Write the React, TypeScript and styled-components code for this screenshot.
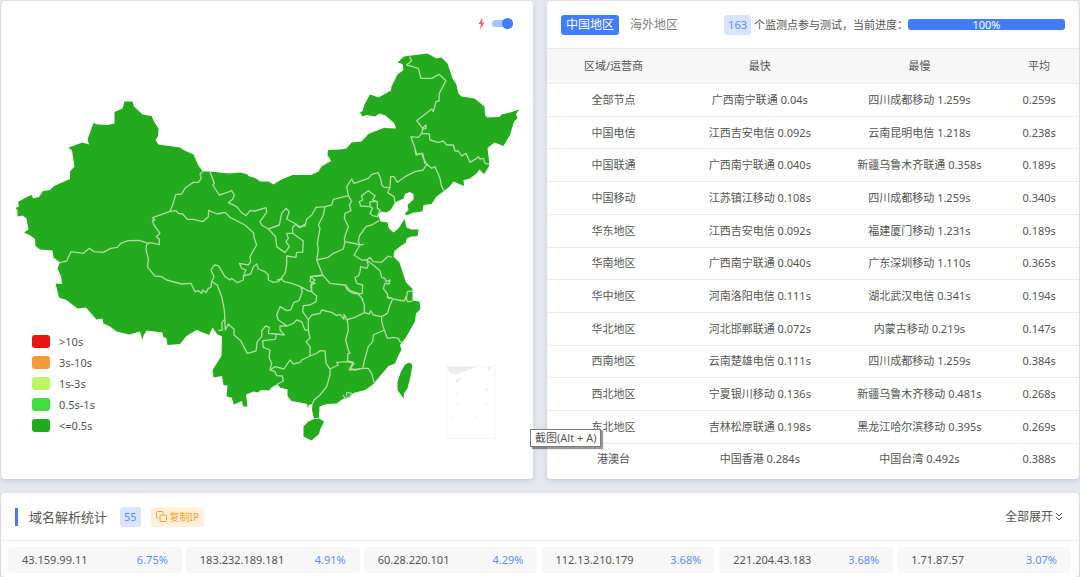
import React from "react";
import styled, { createGlobalStyle } from "styled-components";

const GlobalStyle = createGlobalStyle`
  *, *::before, *::after { box-sizing: border-box; }
  body {
    margin: 0;
    background: #e5e9ef;
    color: #555;
    font-family: "Noto Sans", "Noto Sans CJK SC", sans-serif;
    font-size: 11px;
    line-height: 16px;
  }
  button, input { font: inherit; color: inherit; margin: 0; }
`;

const Page = styled.main`
  position: relative;
  display: flex;
  flex-direction: column;
  gap: 14px;
  padding: 1px 1px 0;
`;

const TopRow = styled.div`
  display: grid;
  grid-template-columns: 1fr 1fr;
  gap: 14px;
`;

const Card = styled.section`
  position: relative;
  min-width: 0;
  background: #fff;
  border-radius: 4px;
  box-shadow: 0 2px 6px rgba(120, 140, 165, 0.3);
`;

const MapSvg = styled.svg`
  display: block;
  width: 100%;
  height: auto;
`;

const MapTools = styled.label`
  position: absolute;
  top: 16px;
  right: 20px;
  display: flex;
  align-items: center;
  gap: 7px;
`;

const Switch = styled.input`
  appearance: none;
  display: flex;
  align-items: center;
  justify-content: flex-end;
  width: 21px;
  height: 7px;
  border-radius: 4px;
  background: #a9c3ff;
  &::before {
    content: "";
    flex: none;
    width: 11px;
    height: 11px;
    border-radius: 50%;
    background: #427dff;
  }
  &:not(:checked) { justify-content: flex-start; }
`;

const Legend = styled.ul`
  position: absolute;
  left: 31px;
  bottom: 43px;
  margin: 0;
  padding: 0;
  list-style: none;
`;

const LegendItem = styled.li<{ $color: string }>`
  display: flex;
  align-items: center;
  gap: 9px;
  height: 21px;
  &::before {
    content: "";
    width: 18px;
    height: 13px;
    border-radius: 3px;
    background: ${(p) => p.$color};
  }
`;

const CardHead = styled.header`
  display: flex;
  align-items: center;
  height: 47px;
  padding: 0 14px;
`;

const Tab = styled.button<{ $active?: boolean }>`
  height: 20px;
  padding: 0 5px;
  border: 0;
  border-radius: 3px;
  background: ${(p) => (p.$active ? "#427dff" : "transparent")};
  color: ${(p) => (p.$active ? "#fff" : "#808080")};
  font-size: 12px;
  line-height: 20px;
  & + & { margin-left: 6px; }
`;

const Badge = styled.span`
  padding: 0 4px;
  border-radius: 3px;
  background: #d9e5ff;
  color: #5c8dff;
  line-height: 20px;
`;

const Progress = styled.div`
  display: flex;
  align-items: center;
  margin-left: auto;
  white-space: nowrap;
`;

const ProgressText = styled.span`
  padding-left: 3px;
`;

const ProgressBar = styled.div`
  width: 157px;
  height: 11px;
  border-radius: 3px;
  background: #427dff;
  color: #fff;
  line-height: 11px;
  text-align: center;
`;

const SpeedTable = styled.table`
  width: 100%;
  height: 427px;
  border-collapse: collapse;
  table-layout: fixed;
  text-align: center;
  white-space: nowrap;
`;

const HeadCell = styled.th<{ $width: number }>`
  width: ${(p) => p.$width}%;
  height: 35px;
  padding: 0;
  border-top: 1px solid #e4eaf0;
  border-bottom: 1px solid #ebeef0;
  background: #f7f7f7;
  font-weight: 400;
`;

const Cell = styled.td`
  padding: 0;
  tr + tr > & { border-top: 1px solid #ebedf0; }
`;

const StatHead = styled(CardHead)`
  height: 48px;
  border-bottom: 1px solid #ebebeb;
  padding-right: 16px;
`;

const StatTitle = styled.h2`
  margin: 0 13px 0 0;
  padding-left: 11px;
  border-left: 3px solid #427dff;
  font-size: 13px;
  font-weight: 400;
  line-height: 18px;
`;

const CopyButton = styled.button`
  display: flex;
  align-items: center;
  gap: 3px;
  height: 20px;
  margin-left: 10px;
  padding: 0 5px;
  border: 0;
  border-radius: 3px;
  background: #fff0dc;
  color: #ff9f1c;
  font-size: 10px;
`;

const ExpandButton = styled.button`
  display: flex;
  align-items: center;
  gap: 2px;
  margin-left: auto;
  padding: 0;
  border: 0;
  background: none;
  font-size: 12px;
`;

const IpGrid = styled.ul`
  display: grid;
  grid-template-columns: repeat(6, 1fr);
  gap: 4px;
  margin: 0;
  padding: 6px 8px 4px 7px;
  list-style: none;
`;

const IpItem = styled.li`
  display: flex;
  justify-content: space-between;
  padding: 0 14px;
  border-radius: 3px;
  background: #f7f7f7;
  line-height: 26px;
`;

const Percent = styled.span`
  color: #5c8dff;
`;

const Tooltip = styled.div`
  position: absolute;
  top: 429px;
  left: 530px;
  padding: 0 4px;
  border: 1px solid #7a7a7a;
  background: #fff;
  box-shadow: 2px 2px 1px rgba(0, 0, 0, 0.4);
  line-height: 16px;
`;

const legend = [
  { label: ">10s", color: "#e61610" },
  { label: "3s-10s", color: "#f89a36" },
  { label: "1s-3s", color: "#bef663" },
  { label: "0.5s-1s", color: "#42dd3f" },
  { label: "<=0.5s", color: "#24aa1d" },
];

const columns = [
  { label: "区域/运营商", width: 25 },
  { label: "最快", width: 30 },
  { label: "最慢", width: 30 },
  { label: "平均", width: 15 },
];

const rows = [
  ["全部节点", "广西南宁联通 0.04s", "四川成都移动 1.259s", "0.259s"],
  ["中国电信", "江西吉安电信 0.092s", "云南昆明电信 1.218s", "0.238s"],
  ["中国联通", "广西南宁联通 0.040s", "新疆乌鲁木齐联通 0.358s", "0.189s"],
  ["中国移动", "江苏镇江移动 0.108s", "四川成都移动 1.259s", "0.340s"],
  ["华东地区", "江西吉安电信 0.092s", "福建厦门移动 1.231s", "0.189s"],
  ["华南地区", "广西南宁联通 0.040s", "广东深圳移动 1.110s", "0.365s"],
  ["华中地区", "河南洛阳电信 0.111s", "湖北武汉电信 0.341s", "0.194s"],
  ["华北地区", "河北邯郸联通 0.072s", "内蒙古移动 0.219s", "0.147s"],
  ["西南地区", "云南楚雄电信 0.111s", "四川成都移动 1.259s", "0.384s"],
  ["西北地区", "宁夏银川移动 0.136s", "新疆乌鲁木齐移动 0.481s", "0.268s"],
  ["东北地区", "吉林松原联通 0.198s", "黑龙江哈尔滨移动 0.395s", "0.269s"],
  ["港澳台", "中国香港 0.284s", "中国台湾 0.492s", "0.388s"],
];

const ips = [
  ["43.159.99.11", "6.75%"],
  ["183.232.189.181", "4.91%"],
  ["60.28.220.101", "4.29%"],
  ["112.13.210.179", "3.68%"],
  ["221.204.43.183", "3.68%"],
  ["1.71.87.57", "3.07%"],
];

const mainland =
  "M15.5 208 19 206.5 18 202 25 198 28 196.5 32 195 33 198.5 39 197 43 191 50 190 54 186 70 179 70 171.5 74.5 166.5 72 150.5 68.5 147.5 82.5 142.5 89 144.5 87.5 139.5 93.5 123 97.5 124.5 107.5 125 114.5 123.5 114.5 112 122.5 108.5 124.5 101.5 132.5 101.5 134 106.5 142.5 114.5 151.5 116 154 121.5 158.5 128.5 158 136 155.5 140 158.5 144.5 180 147.5 183.5 150 193.5 154.5 198.5 166 203 171.5 210 171.5 228.5 173.5 240 172.5 246.5 174 249.5 176.5 255 178 260.5 181.5 268.5 181.5 273.5 184.5 281.5 179.5 292.5 175 311 175 318.5 171.5 321.5 166.5 331 161 327.5 155 328 150 340 149.5 346.5 148.5 351.5 142.5 361.5 141.5 368.5 134 383.5 128 396 128.5 394.5 123.5 385.5 115.5 379.5 113.5 375 116.5 366.5 115 362.5 116.5 360 112.5 362.5 111 364.5 104.5 370 94.5 378.5 97.5 391 90.5 391.5 86.5 397.5 74.5 403.5 70 402.5 64 397.5 62.5 404 56.5 411.5 55.5 427.5 53.5 436.5 58.5 441.5 57.5 447.5 63.5 452.5 78.5 456 83.5 458.5 93.5 461.5 96.5 474.5 98.5 484.5 106.5 485 115 487.5 117.5 499.5 117 501.5 114.5 510 112.5 519.5 109.5 516 114 517.5 118.5 514 121.5 510 135 503.5 146 494.5 142.5 487.5 148 489.5 165 486.5 170.5 484 174 479.5 169.5 476.5 173.5 470 178.5 463.5 180 464 186 453.5 181.5 450 186 443.5 191.5 436.5 196.5 431.5 204 423.5 205 422.5 211.5 413.5 212.5 406.5 215.5 405 213.5 408.5 210 407.5 205 413.5 199.5 413.5 194 409.5 192 405 194 403.5 198.5 395 202.5 391 209.5 386.5 212.5 381 211.5 378 215 380.5 221.5 387.5 222.5 389 228.5 393.5 232.5 398.5 228.5 404.5 219 406.5 227.5 411.5 229.5 418.5 229.5 417.5 236 411.5 236.5 406.5 238.5 406 242.5 400 246.5 394.5 251 393.5 256.5 399.5 262.5 403.5 275 406 282.5 412.5 289 412.5 300.5 419.5 301.5 420.5 309 416 313.5 415 321.5 411.5 327.5 406.5 336.5 400 345 401.5 350 398.5 355 395 363.5 388.5 366 380 376 373.5 384 365 390 353.5 393 348.5 398 343.5 398.5 336.5 403.5 326.5 404 319.5 406.5 319 417.5 314 418.5 312 410 312.5 404 308.5 405 308 409 307 404 300 402.5 291.5 401 287.5 396 287.5 389.5 280 387.5 277.5 384 271.5 387.5 269 390.5 261 390 258 392.5 253.5 391.5 246 394.5 247.5 406.5 243 406.5 242 401 234 404.5 231.5 397.5 226.5 396.5 227.5 385.5 223.5 385 222 376 213.5 377.5 212.5 370 216 364.5 221.5 356 222 336.5 217.5 334.5 212.5 327.5 209 335 196.5 330 186.5 336 180 344 167.5 345 166.5 338.5 163 336.5 162.5 332.5 146.5 330.5 143.5 335.5 142.5 340 140 331.5 129.5 334.5 116.5 331.5 110 326.5 103.5 323.5 102.5 318.5 96.5 319.5 86 307.5 77.5 308.5 66.5 300 59 297.5 55.5 283.5 62 284 61 276.5 57.5 268.5 60 262.5 53.5 257.5 52.5 250.5 40 249.5 35.5 246 35 239 29.5 235 24 232.5 28.5 229.5 26.5 218.5 22.5 215.5 17.5 216.5 17.5 210.5Z";
const hainan = "M314 419 319 418.5 324 421.5 320 430 319 434 311.5 440.5 303.5 436.5 303.5 426.5 308.5 421.5Z";
const taiwan = "M409.5 362.5 412.5 365 410.5 376.5 407.5 388.5 404 393.5 403.5 398.5 397.5 390 397.5 381.5 401 371.5 405 364.5Z";

// Province borders, split by area; each area has its own origin and a grid of three units per map unit.
const borders = [
  {
    x: 40,
    y: 220,
    d: "M60 128 80 123 93 95 130 100 148 85 162 95 190 97 212 85 232 82 242 70 265 62 298 61 325 70",
  },
  {
    x: 130,
    y: 150,
    d: "M219 64 210 72 214 85 205 97 190 97 178 105 165 115 155 132 137 134 128 165 120 184 68 203 75 210 67 211 72 225 90 250 79 260 88 268 88 284 60 278 50 283M120 184 138 182 145 190 158 192 172 208 190 208 218 215 235 200 236 181 262 192 285 187 300 202 345 225 370 248 373 265 380 285 372 298 360 320 362 335 355 345 328 340 335 355 348 360 340 378 362 372 370 350 380 342 385 357 405 365 415 375 415 390 430 397 445 395 450 390M240 65 253 100 248 105 268 135 290 128 305 122 313 135 308 148 295 158 320 170 335 188 348 197 360 182 375 183 408 173 410 187 390 215 395 225 415 237 448 225 455 190 468 175 478 185 470 207 498 222 488 232 488 250 470 250 475 265 468 275 478 290 465 308 440 290 437 260 415 237M498 222 510 233 525 222M488 250 520 273 518 307 500 307 498 322 470 318 470 345 465 370 450 390M50 283 48 300 55 325 53 352 75 378 95 380 110 390 155 402 183 400 195 425 205 422 215 430 218 420 228 428 235 415 243 412 245 395 252 380 243 360 253 345 265 347 285 380 300 390 305 385 322 398 340 390 340 378M245 395 262 405 275 440 283 480",
  },
  {
    x: 200,
    y: 270,
    d: "M73 120 76 180 74 148 65 158 67 180 55 182M76 180 85 162 102 178 102 195 122 212 142 250 168 243 172 215 185 200 185 183 197 168 208 172 205 190 228 192 228 202 225 208 188 212 190 232 210 240 207 262 215 280 210 300 225 305 230 317 247 318 250 333 232 342M228 192 253 195 240 180 240 168 262 168 280 160 290 150 305 155 315 180 325 180 330 205 318 215 330 230 330 258M210 300 225 290 252 297 270 270 280 282 300 277 305 270 330 258M262 168 235 150 230 135 240 110 260 122 272 120 282 97 297 92 307 65 302 50M230 30 245 27 252 35 275 40 302 50 325 63 335 65 350 78 348 95 330 105 310 107 308 125 325 150 325 180M335 65 332 45 345 40 330 35 333 20 368 17M435 43 450 62 480 72M325 150 335 135 360 130 365 120 395 127 410 137 420 133 432 148 432 133 442 150 445 180 437 210 445 240 450 250 444 250 442 275M330 258 350 250 360 242 375 243 378 280 390 297 415 285 410 277 442 275 462 280 448 300 480 297M390 297 390 315 380 350 360 375 342 390 337 402M430 375 435 385 450 380 455 370 440 367 440 377",
  },
  {
    x: 290,
    y: 150,
    d: "M20 225 25 230 45 228 50 208 65 195 78 172 105 170 125 165 130 148 175 137 170 110 185 87 192 100 235 85 245 73 265 68 273 90 275 105 283 112 300 112 302 80 312 80 322 97 345 80 375 65 400 60 410 42 400 25 395 10 378 15 375 0M410 42 425 55 435 50 450 85 455 110 462 123M300 112 293 128 312 140 315 158M105 170 100 195 85 225 90 235 82 280 85 300 80 330 115 322 130 310 160 297 165 275 200 282 210 285 192 315 215 330 230 330M175 137 185 155 178 165 183 182 165 190 163 205 175 230 163 265 165 275M235 122 255 137 248 150 262 155 240 155 240 170 212 168 208 155 218 150 215 137ZM262 155 262 175 270 180 262 200 248 197 240 190 248 175 240 170M267 212 245 225 228 230 208 258 205 275 210 285 222 283M230 330 240 322 250 335 275 337 295 318 305 322M80 330 98 375 60 380 75 390 65 400 65 425M98 375 120 400 165 405 172 420 190 430 205 432 220 450M230 330 235 345 230 355 212 350 210 365 205 378 195 382 200 400 218 405 217 430 205 432M230 330 250 345 270 362 275 382 285 385 288 395 300 390 297 402 285 400 280 415 292 432 295 445 305 443M368 423 352 425 350 440 345 450",
  },
  {
    x: 330,
    y: 230,
    d: "M95 205 103 225 103 248 118 252 122 242 130 255 155 260 172 250 180 225 188 207 170 200M188 207 222 213 228 200 232 215 247 214M155 260 155 275 163 300 130 315 128 335 115 350 105 385 98 415 75 420 60 415 70 397 55 393M163 300 172 325 190 322 205 325 210 335 222 340M48 270 75 262 103 248M98 415 115 415 125 430 133 460",
  },
  {
    x: 340,
    y: 40,
    d: "M208 50 215 62 200 75 218 80 235 85 243 115 275 115 297 103 318 122 298 160 297 183 288 185 280 215 275 207 230 242 248 265 258 255 258 265 248 268 245 280 268 282 270 300 295 307 310 303 320 315 340 315 345 333 355 333 365 348 378 340 390 367 410 355 415 350 420 357 430 355 435 370 448 373M245 280 235 292 213 290 225 325 230 343 248 340 255 372",
  },
];

function ChinaMap() {
  return (
    <MapSvg viewBox="1 1 532 478" role="img" aria-label="中国地图">
      <g fill="#24aa1d">
        <path d={mainland} />
        <path d={hainan} />
        <path d={taiwan} />
      </g>
      <g fill="none" stroke="#acdca0" strokeLinejoin="round">
        {borders.map((area) => (
          <path
            key={`${area.x}-${area.y}`}
            d={area.d}
            strokeWidth="4"
            transform={`translate(${area.x} ${area.y}) scale(0.33333)`}
          />
        ))}
      </g>
      <rect x="446.5" y="366.5" width="49" height="72" fill="none" stroke="#f7f7f7" />
      <path
        fill="#ececec"
        d="M447 367 477 366.500 465 371 456 374.500 450 373ZM457 379 460 378 458 382 455 383ZM487 367 491 367 490 371ZM486 389 488 388 487 393ZM456 391 458 395 456 394ZM458 402 459 404 456 406ZM485 402 487 404 485 405ZM451 416 453 420 451 419ZM479 414 476 420 477 416Z"
      />
    </MapSvg>
  );
}

export default function App() {
  return (
    <>
      <GlobalStyle />
      <Page lang="zh-CN">
        <TopRow>
          <Card>
            <ChinaMap />
            <MapTools>
              <svg width="7" height="13" viewBox="0 0 7 13" aria-hidden="true">
                <path d="M4.500 0.500 0.500 7H3L2 12.500 6.500 5.500H4Z" fill="#ff5a5f" />
              </svg>
              <Switch type="checkbox" role="switch" aria-label="快速模式" defaultChecked />
            </MapTools>
            <Legend>
              {legend.map((item) => (
                <LegendItem key={item.label} $color={item.color}>
                  {item.label}
                </LegendItem>
              ))}
            </Legend>
          </Card>
          <Card>
            <CardHead>
              <Tab type="button" $active>中国地区</Tab>
              <Tab type="button">海外地区</Tab>
              <Progress>
                <Badge>163</Badge>
                <ProgressText>个监测点参与测试，当前进度：</ProgressText>
                <ProgressBar>100%</ProgressBar>
              </Progress>
            </CardHead>
            <SpeedTable>
              <thead>
                <tr>
                  {columns.map((c) => (
                    <HeadCell key={c.label} scope="col" $width={c.width}>{c.label}</HeadCell>
                  ))}
                </tr>
              </thead>
              <tbody>
                {rows.map((row) => (
                  <tr key={row[0]}>
                    {row.map((value, i) => (
                      <Cell key={i}>{value}</Cell>
                    ))}
                  </tr>
                ))}
              </tbody>
            </SpeedTable>
          </Card>
        </TopRow>
        <Card>
          <StatHead>
            <StatTitle>域名解析统计</StatTitle>
            <Badge>55</Badge>
            <CopyButton type="button">
              <svg width="11" height="11" viewBox="0 0 11 11" fill="none" stroke="currentColor" aria-hidden="true">
                <rect x="4" y="4" width="6.500" height="6.500" rx="1" />
                <path d="M2.500 7H1.500a1 1 0 0 1-1-1V1.500a1 1 0 0 1 1-1H6a1 1 0 0 1 1 1V2.500" />
              </svg>
              复制IP
            </CopyButton>
            <ExpandButton type="button">
              全部展开
              <svg width="8" height="9" viewBox="0 0 8 9" fill="none" stroke="currentColor" aria-hidden="true">
                <path d="M1 1 4 4 7 1M1 5 4 8 7 5" />
              </svg>
            </ExpandButton>
          </StatHead>
          <IpGrid>
            {ips.map(([ip, percent]) => (
              <IpItem key={ip}>
                {ip}
                <Percent>{percent}</Percent>
              </IpItem>
            ))}
          </IpGrid>
        </Card>
        <Tooltip role="tooltip">截图(Alt + A)</Tooltip>
      </Page>
    </>
  );
}
